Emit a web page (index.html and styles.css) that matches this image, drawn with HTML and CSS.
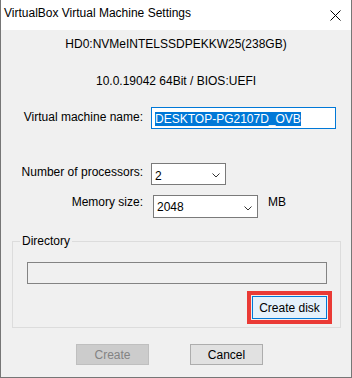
FILE: index.html
```html
<!DOCTYPE html>
<html lang="en">
<head>
    <meta charset="UTF-8">
    <title>VirtualBox Virtual Machine Settings</title>
    <link rel="stylesheet" href="styles.css">
</head>
<body>
    <div class="window">
        <!-- barre de titre -->
        <div class="titlebar">
            <span class="title">VirtualBox Virtual Machine Settings</span>
            <span class="close">
                <svg width="11" height="11" viewBox="0 0 11 11">
                    <path d="M0.5 0.5 L10.5 10.5 M10.5 0.5 L0.5 10.5" stroke="#000" stroke-width="1" fill="none"/>
                </svg>
            </span>
        </div>

        <div class="content">
            <div class="info first">HD0:NVMeINTELSSDPEKKW25(238GB)</div>
            <div class="info second">10.0.19042 64Bit / BIOS:UEFI</div>

            <div class="row row-name">
                <label class="label">Virtual machine name:</label>
                <div class="textbox focused"><span class="selected">DESKTOP-PG2107D_OVB</span></div>
            </div>

            <div class="row row-cpu">
                <label class="label">Number of processors:</label>
                <div class="combo combo-cpu">
                    <span>2</span>
                    <svg width="8" height="5" viewBox="0 0 8 5"><path d="M0.5 0.5 L4 4 L7.5 0.5" stroke="#333" fill="none"/></svg>
                </div>
            </div>

            <div class="row row-mem">
                <label class="label">Memory size:</label>
                <div class="combo combo-mem">
                    <span>2048</span>
                    <svg width="8" height="5" viewBox="0 0 8 5"><path d="M0.5 0.5 L4 4 L7.5 0.5" stroke="#333" fill="none"/></svg>
                </div>
                <span class="unit">MB</span>
            </div>

            <fieldset class="group">
                <legend>Directory</legend>
                <div class="textbox disabled"></div>
                <div class="actions">
                    <div class="highlight">
                        <button class="btn btn-default">Create disk</button>
                    </div>
                </div>
            </fieldset>

            <div class="footer">
                <button class="btn btn-disabled">Create</button>
                <button class="btn">Cancel</button>
            </div>
        </div>
    </div>
</body>
</html>
```

FILE: styles.css
```css
body {
    margin: 0;
    font-family: "Liberation Sans", Arial, sans-serif;
    font-size: 12px;
    line-height: 15px;
    color: #000;
    background-color: #f0f0f0;
}

.window {
    width: 352px;
    height: 378px;
    box-sizing: border-box;
    border: 1px solid #767676;
    border-top: none;
    background-color: #f0f0f0;
    overflow: hidden;
}

/* barre de titre */
.titlebar {
    height: 30px;
    background-color: #fff;
    display: flex;
    justify-content: space-between;
}

.title {
    padding-left: 3px;
    padding-top: 6px;
}

.close {
    width: 31px;
    height: 30px;
    display: flex;
    align-items: center;
    justify-content: center;
}

.content {
    padding-top: 7px;
}

.info {
    text-align: center;
}

.info.second {
    margin-top: 22px;
}

.row {
    display: flex;
    align-items: flex-start;
}

.label {
    width: 142px;
    text-align: right;
}

.row-name {
    margin-top: 18px;
}
.row-name .label {
    margin-top: 3px;
}

.row-cpu {
    margin-top: 34px;
}
.row-cpu .label {
    margin-top: 2px;
}

.row-mem {
    margin-top: 10px;
}

.textbox {
    box-sizing: border-box;
    height: 22px;
    border: 1px solid #7a7a7a;
}

.textbox.focused {
    margin-left: 8px;
    width: 185px;
    border-color: #0078d7;
    background-color: #fff;
    padding: 4px 3px 0 3px;
}

.selected {
    display: inline-block;
    line-height: 14px;
    background-color: #0078d7;
    color: #fff;
}

.combo {
    box-sizing: border-box;
    border: 1px solid #7a7a7a;
    background-color: #fff;
    display: flex;
    justify-content: space-between;
    align-items: flex-start;
    padding-left: 3px;
    padding-right: 5px;
}

.combo svg {
    margin-top: 4px;
}

.combo-cpu {
    margin-left: 8px;
    width: 75px;
    height: 22px;
    padding-top: 5px;
}

.combo-mem {
    margin-left: 10px;
    width: 105px;
    height: 23px;
    padding-top: 4px;
}

.combo-mem svg {
    margin-top: 6px;
}

.unit {
    margin-left: 10px;
}

/* cadre Directory */
.group {
    margin: 16px 10px 0 11px;
    padding: 0 8px 3px 14px;
    border: 1px solid #dcdcdc;
    min-width: 0;
}

.group legend {
    margin-left: -7px;
    padding: 0 2px;
}

.textbox.disabled {
    margin-top: 13px;
    margin-right: 5px;
    background-color: #f0f0f0;
    border-color: #838383;
}

.actions {
    display: flex;
    justify-content: flex-end;
    margin-top: 7px;
}

.highlight {
    border: 4px solid #ea3a35;
    padding: 1px;
    display: flex;
}

.btn {
    box-sizing: border-box;
    width: 73px;
    height: 21px;
    padding: 0;
    font-family: inherit;
    font-size: 12px;
    color: #000;
    background-color: #e1e1e1;
    border: 1px solid #adadad;
}

.btn-default {
    width: 75px;
    height: 23px;
    background-color: #e5f1fb;
    border-color: #0078d7;
}

.btn-disabled {
    background-color: #cccccc;
    border-color: #bfbfbf;
    color: #838383;
}

.footer {
    display: flex;
    gap: 41px;
    padding-left: 75px;
    margin-top: 16px;
}
```
